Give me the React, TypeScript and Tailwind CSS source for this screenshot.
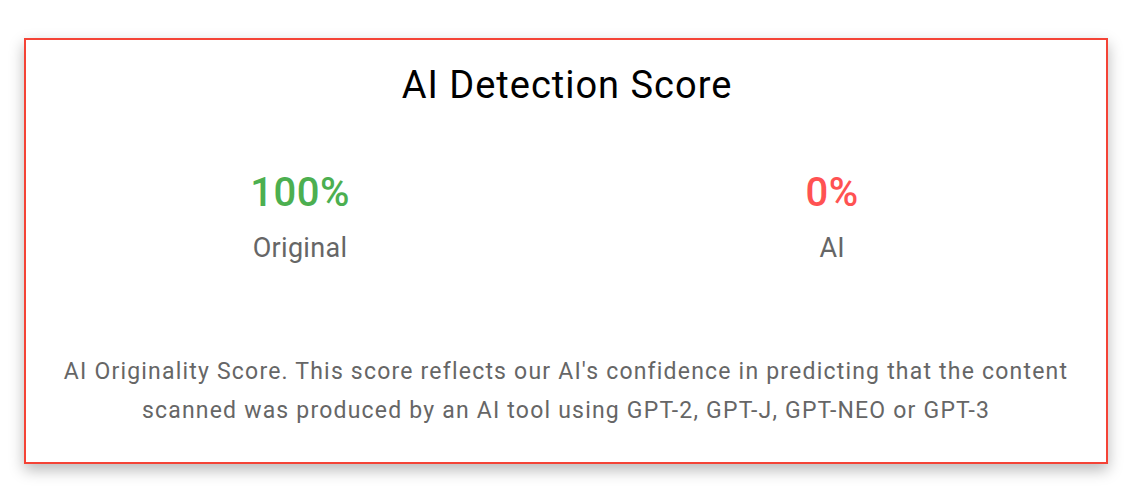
export default function App() {
  return (
    <div className="min-h-screen bg-white pl-[24px] pt-[38px] font-['Roboto',sans-serif]">
      <div className="w-[1084px] h-[426px] border-2 border-[#f44336] bg-white shadow-[0_6px_14px_rgba(0,0,0,0.28)] flex flex-col items-center">
        <h1 className="mt-[20px] text-[38px] leading-[50px] text-black tracking-[1px] ml-[2px]">
          AI Detection Score
        </h1>

        <div className="w-full grid grid-cols-2 mt-[60px] px-[8px]">
          <div className="flex flex-col items-center">
            <span className="text-[40px] leading-[46px] font-medium text-[#4caf50] tracking-[0.5px]">100%</span>
            <span className="mt-[16px] text-[27px] leading-[32px] text-[#666666] tracking-[0.3px]">Original</span>
          </div>
          <div className="flex flex-col items-center">
            <span className="text-[40px] leading-[46px] font-medium text-[#ff5252] tracking-[0.5px]">0%</span>
            <span className="mt-[16px] text-[27px] leading-[32px] text-[#666666]">AI</span>
          </div>
        </div>

        <p className="mt-[88px] px-[20px] text-center text-[23px] leading-[39px] tracking-[1.2px] text-[#666666] whitespace-nowrap">
          AI Originality Score. This score reflects our AI's confidence in predicting that the content
          <br />
          scanned was produced by an AI tool using GPT-2, GPT-J, GPT-NEO or GPT-3
        </p>
      </div>
    </div>
  );
}
